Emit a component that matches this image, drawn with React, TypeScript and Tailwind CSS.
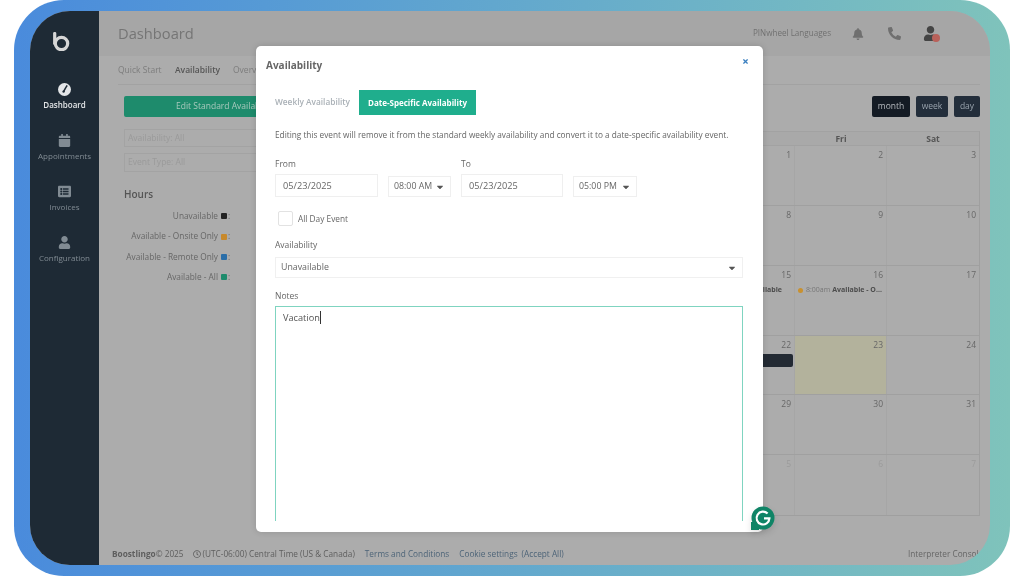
import React from "react";
import { FaBell, FaCalendar, FaListAlt, FaUser, FaPhoneAlt, FaRegClock, FaCaretDown, FaTimes } from "react-icons/fa";

const FONT = "font-['Open_Sans','Noto_Sans',sans-serif]";

function NavItem({ icon, label, active }: { icon: React.ReactNode; label: string; active?: boolean }) {
  return (
    <div className={`flex h-[51px] flex-col items-center ${active ? "text-[#e4e6e8]" : "text-[#818b93]"}`}>
      <div className="flex h-[19px] items-center justify-center text-[13px]">{icon}</div>
      <div className={`text-[8px] leading-[12px] ${active ? "font-semibold" : ""}`}>{label}</div>
    </div>
  );
}

function LegendRow({ label, color }: { label: string; color: string }) {
  return (
    <div className="flex h-[20.4px] items-center justify-end whitespace-nowrap text-[8.3px] text-[#666]">
      <span>{label}</span>
      <span className={`ml-[3px] h-[6px] w-[6px] shrink-0 rounded-[1px] ${color}`} />
      <span className="ml-[1px] w-[4px] shrink-0">:</span>
    </div>
  );
}

const rows: { h: string; days: string[] }[] = [
  { h: "h-[60px]", days: ["27", "28", "29", "30", "1", "2", "3"] },
  { h: "h-[60px]", days: ["4", "5", "6", "7", "8", "9", "10"] },
  { h: "h-[70px]", days: ["11", "12", "13", "14", "15", "16", "17"] },
  { h: "h-[59px]", days: ["18", "19", "20", "21", "22", "23", "24"] },
  { h: "h-[60px]", days: ["25", "26", "27", "28", "29", "30", "31"] },
  { h: "h-[60px]", days: ["1", "2", "3", "4", "5", "6", "7"] },
];

function Calendar() {
  return (
    <div className="w-[645px] border-r border-b border-[#9f9f9f]">
      <div className="grid h-[15px] grid-cols-7 border-y border-[#a2a2a2] bg-[#a9a9a9] text-center text-[8.5px] font-bold leading-[13px] text-[#555]">
        {["Sun", "Mon", "Tue", "Wed", "Thu", "Fri", "Sat"].map((d) => (
          <div key={d}>{d}</div>
        ))}
      </div>
      {rows.map((r, ri) => (
        <div key={ri} className={`grid grid-cols-7 border-b border-[#a0a0a0] last:border-b-0 ${r.h}`}>
          {r.days.map((d, i) => {
            const dim = ri === 5;
            const today = ri === 3 && i === 5;
            return (
              <div
                key={i}
                className={`relative border-r border-[#a6a6a6] pr-[3px] pt-[3px] text-right text-[8.5px] leading-[12px] last:border-r-0 ${
                  dim ? "text-[#9b9b9b]" : "text-[#676767]"
                } ${today ? "bg-[#b3b29c]" : ""}`}
              >
                {d}
                {ri === 2 && i === 4 && (
                  <div className="absolute right-[12px] top-[19px] text-[7px] font-bold leading-[10px] text-[#4c4c4c]">Available</div>
                )}
                {ri === 2 && i === 5 && (
                  <div className="absolute left-[3px] top-[19px] flex items-center whitespace-nowrap text-[7px] leading-[10px]">
                    <span className="h-[5px] w-[5px] rounded-full bg-[#c9912f]" />
                    <span className="ml-[3px] text-[#777]">8:00am</span>
                    <span className="ml-[2px] font-bold text-[#4c4c4c]">Available - O...</span>
                  </div>
                )}
                {ri === 3 && i === 4 && (
                  <div className="absolute left-[3px] right-[1px] top-[18px] h-[13px] rounded-[2px] bg-[#232a33]" />
                )}
              </div>
            );
          })}
        </div>
      ))}
    </div>
  );
}

function Field({ children, w }: { children: React.ReactNode; w: string }) {
  return (
    <div className={`flex h-[23px] items-center border border-[#efefef] bg-white px-[7px] text-[9.2px] text-[#666] ${w}`}>
      {children}
    </div>
  );
}

function Select({ children, w }: { children: React.ReactNode; w: string }) {
  return (
    <div className={`ml-[10px] flex h-[21px] items-center justify-between border border-[#efefef] pl-[5px] pr-[5px] text-[8.8px] text-[#666] ${w}`}>
      {children} <FaCaretDown className="text-[10px] text-[#555]" />
    </div>
  );
}

function Modal() {
  return (
    <div className="absolute left-[256px] top-[46px] h-[486px] w-[507px] overflow-hidden rounded-[5px] bg-white shadow-[0_0_6px_rgba(0,0,0,0.15)]">
      <div className="relative h-[44px] pl-[10px] pt-[12px] text-[10px] font-bold leading-[14px] text-[#666]">
        Availability
        <FaTimes className="absolute right-[14px] top-[12px] text-[7px] text-[#3a7fc0]" />
      </div>
      <div className="flex h-[25px] pl-[19px]">
        <div className="flex w-[84px] items-center text-[8.3px] font-semibold text-[#a9b0b6]">Weekly Availability</div>
        <div className="flex w-[117px] items-center justify-center bg-[#1fae8d] text-[8px] font-bold text-white">
          Date-Specific Availability
        </div>
      </div>
      <div className="ml-[19px] mt-[14px] whitespace-nowrap text-[8.25px] leading-[12px] text-[#666]">
        Editing this event will remove it from the standard weekly availability and convert it to a date-specific availability event.
      </div>
      <div className="ml-[19px] mt-[17px] flex text-[8.5px] leading-[12px] text-[#666]">
        <div className="w-[186px]">From</div>
        <div>To</div>
      </div>
      <div className="ml-[19px] mt-[4px] flex items-end">
        <Field w="w-[103px]">05/23/2025</Field>
        <Select w="w-[63px]">08:00 AM</Select>
        <div className="ml-[10px]">
          <Field w="w-[102px]">05/23/2025</Field>
        </div>
        <Select w="w-[64px]">05:00 PM</Select>
      </div>
      <div className="ml-[22px] mt-[14px] flex items-center">
        <div className="h-[15px] w-[15px] rounded-[2px] border border-[#e2e2e2] bg-white" />
        <div className="ml-[5px] mt-[1px] text-[8.3px] text-[#666]">All Day Event</div>
      </div>
      <div className="ml-[19px] mt-[13px] text-[8.5px] leading-[12px] text-[#666]">Availability</div>
      <div className="ml-[19px] mt-[6px] flex h-[21px] w-[468px] items-center justify-between border border-[#f0f0f0] pl-[5px] pr-[5px] text-[8.8px] text-[#666]">
        Unavailable <FaCaretDown className="text-[10px] text-[#555]" />
      </div>
      <div className="ml-[19px] mt-[12px] text-[8.5px] leading-[12px] text-[#666]">Notes</div>
      <div className="ml-[19px] mt-[4px] flex h-[215px] w-[468px] items-start border-x border-t border-[#7fd4c0] pl-[7px] pt-[4px] text-[9.2px] leading-[14px] text-[#555]">
        Vacation<span className="ml-[0.5px] h-[13px] w-[1px] bg-[#333]" />
      </div>
    </div>
  );
}

export default function App() {
  return (
    <div className={`relative h-[576px] w-[1024px] overflow-hidden bg-white blur-[0.35px] ${FONT}`}>
      <div className="ml-[14px] h-[576px] w-[996px] rounded-[50px] bg-gradient-to-r from-[#4a8bdc] to-[#7fc3bb] pl-[16px] pr-[20px] pt-[11px]">
        <div className="flex h-[554px] w-[960px] overflow-hidden rounded-[40px] bg-[#acacac]">
          <div className="flex w-[69px] shrink-0 flex-col items-center bg-[#1e2a35] pt-[21px]">
            <svg width="17" height="19" viewBox="0 0 17 19" fill="none" className="mb-[29px] -ml-[7px]">
              <path d="M1.7 1.5v10" stroke="#d6d6d6" strokeWidth="3.2" strokeLinecap="round" />
              <circle cx="8.5" cy="11.5" r="6.2" stroke="#d6d6d6" strokeWidth="3.2" />
            </svg>
            <NavItem
              icon={
                <svg width="13" height="13" viewBox="0 0 13 13">
                  <circle cx="6.5" cy="6.5" r="6.5" fill="#e4e6e8" />
                  <path d="M8.8 2.8 5.8 8.2" stroke="#1e2a35" strokeWidth="1.5" strokeLinecap="round" />
                  <circle cx="5.6" cy="8.6" r="1.2" fill="#1e2a35" />
                </svg>
              }
              label="Dashboard"
              active
            />
            <NavItem icon={<FaCalendar />} label="Appointments" />
            <NavItem icon={<FaListAlt />} label="Invoices" />
            <NavItem icon={<FaUser />} label="Configuration" />
          </div>
          <div className="flex min-w-0 flex-1 flex-col">
            <div className="flex h-[45px] shrink-0 items-center bg-[#a6a6a6] pl-[19px] pr-[52px]">
              <div className="mb-[1px] text-[14.7px] text-[#757575]">Dashboard</div>
              <div className="ml-auto text-[8.1px] text-[#707070]">PINwheel Languages</div>
              <FaBell className="ml-[21px] text-[12px] text-[#6f6f6f]" />
              <FaPhoneAlt className="ml-[24px] text-[13px] text-[#6f6f6f]" />
              <div className="relative ml-[22px]">
                <FaUser className="text-[15px] text-[#444]" />
                <span className="absolute -right-[2px] -bottom-[1px] h-[8px] w-[8px] rounded-full bg-[#b9615a]" />
              </div>
            </div>
            <div className="ml-[19px] mr-[10px] flex h-[29px] shrink-0 items-center border-b border-[#a2a2a2] text-[8.5px] text-[#7d7d7d]">
              <span className="w-[57px]">Quick Start</span>
              <span className="w-[58px] font-semibold text-[#555]">Availability</span>
              <span>Overview</span>
            </div>
            <div className="flex min-h-0 flex-1 pl-[25px] pt-[11px]">
              <div className="w-[211px] shrink-0">
                <div className="flex h-[21px] items-center rounded-[2px] bg-[#1e8b6c] pl-[52px] text-[8.5px] text-[#a9c9bd]">
                  Edit Standard Availability
                </div>
                <div className="mt-[12px] flex h-[18px] items-center border-y border-l border-[#a3a3a3] pl-[3px] text-[8.5px] text-[#9a9a9a]">Availability: All</div>
                <div className="mt-[6px] flex h-[19px] items-center border-y border-l border-[#a3a3a3] pl-[3px] text-[8.5px] text-[#9a9a9a]">Event Type: All</div>
                <div className="mt-[15px] text-[10px] font-semibold leading-[14px] text-[#555]">Hours</div>
                <div className="mt-[5px] w-[108px]">
                  <LegendRow label="Unavailable" color="bg-[#222]" />
                  <LegendRow label="Available - Onsite Only" color="bg-[#c8892b]" />
                  <LegendRow label="Available - Remote Only" color="bg-[#2a6ea8]" />
                  <LegendRow label="Available - All" color="bg-[#1e8b6c]" />
                </div>
              </div>
              <div className="min-w-0 flex-1">
                <div className="mr-[10px] flex h-[21px] justify-end gap-[6px] text-[8.5px]">
                  <div className="flex w-[38px] items-center justify-center rounded-[2px] bg-[#141b24] text-[#b5b9bd]">month</div>
                  <div className="flex w-[32px] items-center justify-center rounded-[2px] bg-[#232e3b] text-[#98a2ac]">week</div>
                  <div className="flex w-[26px] items-center justify-center rounded-[2px] bg-[#232e3b] text-[#98a2ac]">day</div>
                </div>
                <div className="mt-[14px]">
                  <Calendar />
                </div>
              </div>
            </div>
            <div className="flex h-[37px] shrink-0 items-start whitespace-nowrap pl-[13px] pt-[20px] text-[8.25px] leading-[12px] text-[#5e5e5e]">
              <span className="font-bold">Boostlingo</span>
              <span>© 2025</span>
              <FaRegClock className="ml-[9px] mr-[2px] mt-[2px] text-[8px]" />
              <span>(UTC-06:00) Central Time (US &amp; Canada)</span>
              <span className="ml-[10px] text-[#4d6478]">Terms and Conditions</span>
              <span className="ml-[10px] text-[#4d6478]">Cookie settings</span>
              <span className="ml-[4px] text-[#4d6478]">(Accept All)</span>
              <span className="ml-auto mr-[10px] w-[72px] overflow-hidden text-[#666]">Interpreter Console</span>
            </div>
          </div>
        </div>
      </div>
      <Modal />
      <svg width="26" height="26" viewBox="0 0 26 26" className="absolute left-[750px] top-[505px] drop-shadow-md">
        <rect x="1" y="17" width="8" height="8" fill="#0f8466" />
        <circle cx="13" cy="13" r="11.5" fill="#0f8466" />
        <path d="M17.6 8.6A6.4 6.4 0 1 0 19.4 13.4H14" fill="none" stroke="#fff" strokeWidth="2.2" />
      </svg>
    </div>
  );
}
